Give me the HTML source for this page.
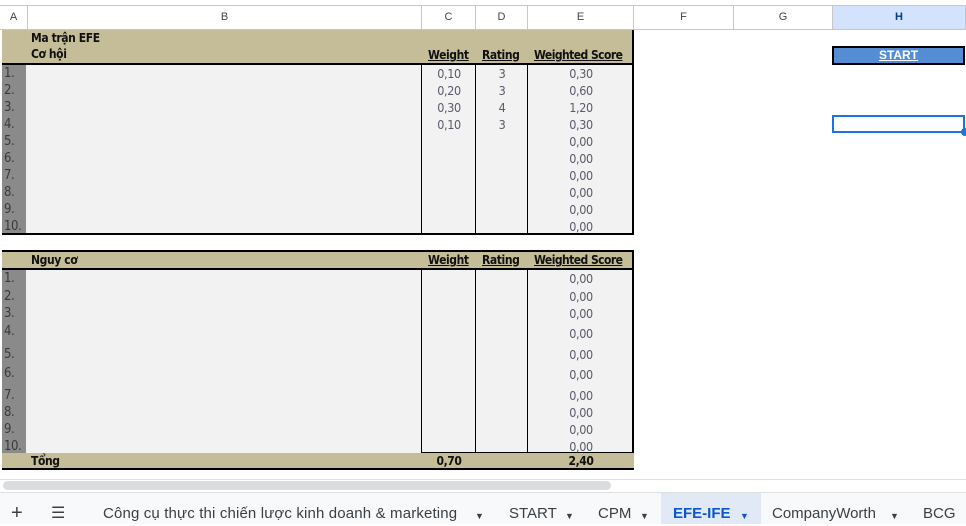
<!DOCTYPE html><html><head><meta charset="utf-8"><style>
*{margin:0;padding:0;box-sizing:border-box}
body{width:966px;height:524px;overflow:hidden;background:#fff;position:relative;font-family:"DejaVu Sans Condensed","Liberation Sans",sans-serif;font-size:12px;color:#222}
.a{position:absolute}
.hd{position:absolute;top:5px;height:25px;border-right:1px solid #c7c7c7;border-bottom:1px solid #c7c7c7;border-top:1px solid #c7c7c7;font-family:"Liberation Sans",sans-serif;font-size:11px;color:#444;text-align:center;line-height:23px;background:#fff}
.t{position:absolute;font-size:12px;line-height:15px;white-space:nowrap;letter-spacing:-0.4px}
.b{font-weight:bold;color:#111}
.u{text-decoration:underline}
.n{color:#3a3a3a;font-size:13px;top:0}
.v{color:#5a5a6a;text-align:center;font-size:12.5px}
.ar{font-size:9px;position:absolute;top:2px}
</style></head><body>
<div class="hd" style="left:0;width:28px">A</div>
<div class="hd" style="left:28px;width:394px">B</div>
<div class="hd" style="left:422px;width:54px">C</div>
<div class="hd" style="left:476px;width:52px">D</div>
<div class="hd" style="left:528px;width:106px">E</div>
<div class="hd" style="left:634px;width:100px">F</div>
<div class="hd" style="left:734px;width:99px">G</div>
<div class="hd" style="left:833px;width:133px;background:#d3e3fd;color:#0b3a8a;font-weight:bold">H</div>

<div class="a" style="left:2px;top:30px;width:632px;height:34px;background:#c4bd97"></div>
<div class="a" style="left:632px;top:30px;width:2px;height:205px;background:#000"></div>
<div class="a" style="left:2px;top:63px;width:632px;height:2px;background:#000"></div>
<div class="a" style="left:2px;top:65px;width:24px;height:169px;background:#8a8a8a"></div>
<div class="a" style="left:26px;top:65px;width:606px;height:169px;background:#f2f2f2"></div>
<div class="a" style="left:421px;top:65px;width:1px;height:169px;background:#000"></div>
<div class="a" style="left:475px;top:65px;width:1px;height:169px;background:#000"></div>
<div class="a" style="left:527px;top:65px;width:1px;height:169px;background:#000"></div>
<div class="a" style="left:2px;top:233px;width:632px;height:2px;background:#000"></div>
<div class="t b" style="left:31px;top:31px">Ma trận EFE</div>
<div class="t b" style="left:31px;top:47px">Cơ hội</div>
<div class="t b u" style="left:428px;top:48px">Weight</div>
<div class="t b u" style="left:482px;top:48px">Rating</div>
<div class="t b u" style="left:534px;top:48px;letter-spacing:-0.55px">Weighted Score</div>

<div class="a" style="left:2px;top:250px;width:632px;height:2px;background:#000"></div>
<div class="a" style="left:2px;top:252px;width:632px;height:16px;background:#c4bd97"></div>
<div class="a" style="left:2px;top:268px;width:632px;height:2px;background:#000"></div>
<div class="a" style="left:632px;top:250px;width:2px;height:220px;background:#000"></div>
<div class="a" style="left:2px;top:270px;width:24px;height:183px;background:#8a8a8a"></div>
<div class="a" style="left:26px;top:270px;width:606px;height:183px;background:#f2f2f2"></div>
<div class="a" style="left:421px;top:270px;width:1px;height:183px;background:#000"></div>
<div class="a" style="left:475px;top:270px;width:1px;height:183px;background:#000"></div>
<div class="a" style="left:527px;top:270px;width:1px;height:183px;background:#000"></div>
<div class="a" style="left:2px;top:453px;width:632px;height:16px;background:#c4bd97"></div>
<div class="a" style="left:421px;top:452px;width:213px;height:1px;background:#000"></div>
<div class="a" style="left:2px;top:468px;width:632px;height:2px;background:#000"></div>
<div class="t b" style="left:31px;top:253px">Nguy cơ</div>
<div class="t b u" style="left:428px;top:253px">Weight</div>
<div class="t b u" style="left:482px;top:253px">Rating</div>
<div class="t b u" style="left:534px;top:253px;letter-spacing:-0.55px">Weighted Score</div>
<div class="t b" style="left:31px;top:454px">Tổng</div>
<div class="t b" style="left:422px;top:454px;width:54px;text-align:center">0,70</div>
<div class="t b" style="left:528px;top:454px;width:106px;text-align:center">2,40</div>

<div id="r"></div>

<div class="a" style="left:832px;top:46px;width:133px;height:19px;background:#000"></div>
<div class="a" style="left:834px;top:48px;width:129px;height:15px;background:#548dd4;color:#fff;font-family:'Liberation Sans',sans-serif;font-weight:bold;font-size:12px;text-align:center;line-height:15px;text-decoration:underline">START</div>
<div class="a" style="left:832px;top:115px;width:133px;height:18px;border:2px solid #1a73e8"></div>
<div class="a" style="left:961px;top:128px;width:8px;height:8px;border-radius:50%;background:#1a73e8"></div>

<div class="a" style="left:0;top:479px;width:966px;height:1px;background:#e0e0e0"></div>
<div class="a" style="left:3px;top:481px;width:608px;height:9px;border-radius:5px;background:#dadce0"></div>
<div class="a" style="left:0;top:492px;width:966px;height:32px;background:#f8f9fa;border-top:1px solid #e0e0e0"></div>
<div class="a" style="left:661px;top:493px;width:100px;height:31px;background:#e1e9f7"></div>
<div class="a" style="top:504px;left:0;width:966px;font-family:'Liberation Sans',sans-serif;font-size:15px;color:#3c4043;line-height:20px">
<span class="a" style="left:11px;font-size:20px;top:-1px">+</span>
<span class="a" style="left:51px;font-size:16px">☰</span>
<span class="a" style="left:103px;letter-spacing:0.15px">Công cụ thực thi chiến lược kinh doanh &amp; marketing</span><span class="ar" style="left:475px">▼</span>
<span class="a" style="left:509px">START</span><span class="ar" style="left:565px">▼</span>
<span class="a" style="left:598px">CPM</span><span class="ar" style="left:640px">▼</span>
<span class="a" style="left:673px;color:#0b57d0;font-weight:bold">EFE-IFE</span><span class="ar" style="left:740px;color:#0b57d0">▼</span>
<span class="a" style="left:772px">CompanyWorth</span><span class="ar" style="left:890px">▼</span>
<span class="a" style="left:923px">BCG</span>
</div>
<script>
var h='';
var y1=[65,82,99,116,133,150,167,184,201,218];
var c=['0,10','0,20','0,30','0,10'],d=['3','3','4','3'],e=['0,30','0,60','1,20','0,30','0,00','0,00','0,00','0,00','0,00','0,00'];
for(var i=0;i<10;i++){var y=y1[i];
h+='<div class="t n" style="left:4px;top:'+(y+1)+'px">'+(i+1)+'.</div>';
if(i<4){h+='<div class="t v" style="left:422px;width:54px;top:'+(y+1)+'px">'+c[i]+'</div><div class="t v" style="left:476px;width:52px;top:'+(y+1)+'px">'+d[i]+'</div>';}
h+='<div class="t v" style="left:528px;width:106px;top:'+(y+1)+'px">'+e[i]+'</div>';}
var y2=[270,288,305,323,346,365,387,404,421,438];
for(var i=0;i<10;i++){var y=y2[i];
h+='<div class="t n" style="left:4px;top:'+(y+1)+'px">'+(i+1)+'.</div>';
h+='<div class="t v" style="left:528px;width:106px;top:'+(y+1+(i==3?2:i==5?1:0))+'px">0,00</div>';}
document.getElementById('r').innerHTML=h;
</script>
</body></html>
